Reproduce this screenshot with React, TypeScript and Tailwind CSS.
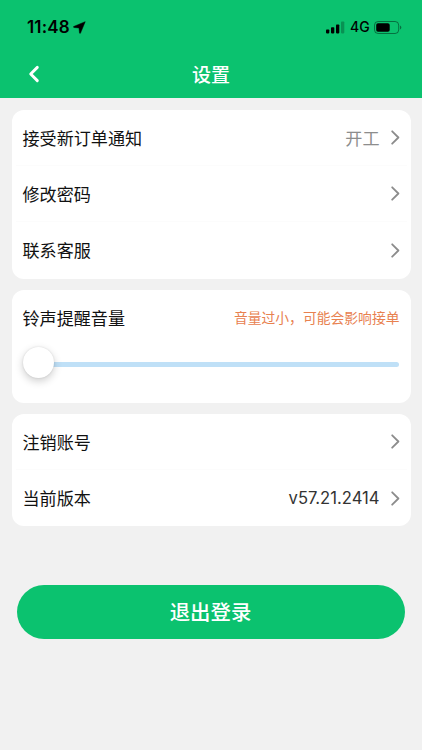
import React from "react";

function Chevron() {
  return (
    <svg width="9" height="15" viewBox="0 0 9 15" fill="none" className="shrink-0">
      <path d="M1.2 1.3 7.4 7.5 1.2 13.7" stroke="#8c8c8c" strokeWidth="1.8" strokeLinecap="round" strokeLinejoin="round" />
    </svg>
  );
}

type RowProps = { label: string; value?: string; valueClass?: string; divided?: boolean };

function Row({ label, value, valueClass = "", divided = false }: RowProps) {
  return (
    <div className={`flex h-[56.2px] shrink-0 items-center justify-between pl-[6.5px] pr-[7px] pt-px ${divided ? "border-b border-[#fcfcfc]" : ""}`}>
      <span className="pt-1">{label}</span>
      <div className="flex items-center gap-[11px]">
        {value && <span className={valueClass}>{value}</span>}
        <Chevron />
      </div>
    </div>
  );
}

function StatusBar() {
  return (
    <div className="flex h-[54px] items-center justify-between pl-[27px] pr-[20px] text-black">
      <div className="flex items-center">
        <span className="w-[43px] font-[Inter,sans-serif] text-[17px] leading-5 font-semibold tracking-[0.15px] whitespace-nowrap">11:48</span>
        <svg width="13" height="13" viewBox="0 0 13 13" className="ml-[3px]">
          <path d="M12.2.7.7 5.5Q.1 6.2.9 6.5l5.1.4.5 5.1q.3.8 1 .1Z" fill="currentColor" stroke="currentColor" strokeWidth=".5" strokeLinejoin="round" />
        </svg>
      </div>
      <div className="flex items-center">
        <svg width="19" height="13" viewBox="0 0 19 13">
          <rect x="0" y="8.4" width="3.3" height="4" rx=".8" />
          <rect x="5" y="6.2" width="3.3" height="6.2" rx=".8" />
          <rect x="10" y="3.4" width="3.3" height="9" rx=".8" />
          <rect x="15" y=".4" width="3.3" height="12" rx=".8" opacity=".25" />
        </svg>
        <span className="ml-[5px] w-[19px] font-[Inter,sans-serif] text-[14px] leading-5 font-medium">4G</span>
        <svg width="28" height="13" viewBox="0 0 28 13" className="ml-[5px]">
          <rect x=".5" y=".5" width="24.2" height="12" rx="3.6" fill="none" stroke="#000" strokeOpacity=".42" />
          <rect x="2.2" y="2.2" width="13.5" height="8.6" rx="1.8" />
          <path d="M26 4.5q1.3.5 1.3 2t-1.3 2Z" opacity=".42" />
        </svg>
      </div>
    </div>
  );
}

export default function App() {
  return (
    <div className="h-[750px] w-[422px] overflow-hidden bg-[#f1f1f1] font-['Liberation_Sans','Noto_Sans_CJK_SC',sans-serif] text-[17.1px] leading-6 text-[#111]">
      <header className="h-[98px] bg-[#0bc26f]">
        <StatusBar />
        <div className="grid h-10 grid-cols-[60px_1fr_60px] items-center text-white">
          <svg width="12" height="18" viewBox="0 0 12 18" fill="none" className="ml-[28px]">
            <path d="M9.3 2.4 2.7 9l6.6 6.6" stroke="white" strokeWidth="2.9" strokeLinecap="round" strokeLinejoin="round" />
          </svg>
          <h1 className="pt-[3px] text-center text-[19px] font-medium">设置</h1>
        </div>
      </header>
      <main className="pl-[11.5px] pr-[11px] pt-[11.5px]">
        <section className="flex h-[169px] flex-col rounded-[12px] bg-white px-[4.5px]">
          <Row label="接受新订单通知" value="开工" valueClass="pt-1 text-[#8d8d8d]" divided />
          <Row label="修改密码" divided />
          <Row label="联系客服" />
        </section>
        <section className="mt-[11.5px] h-[112.5px] rounded-[12px] bg-white pl-[11px] pr-[11.5px]">
          <div className="flex h-[56px] items-center justify-between">
            <span className="pt-1">铃声提醒音量</span>
            <span className="pt-[2px] text-[13.8px] text-[#e8814f]">音量过小，可能会影响接单</span>
          </div>
          <div className="flex h-[33px] items-center">
            <div className="z-10 size-[31px] shrink-0 rounded-full bg-white shadow-[0_3px_9px_rgba(0,0,0,0.2),0_0_2px_rgba(0,0,0,0.12)]" />
            <div className="-ml-4 mr-[1px] mt-[3px] h-[5px] flex-1 rounded-full bg-[#bfe0f7]" />
          </div>
        </section>
        <section className="mt-[11px] flex h-[112.5px] flex-col rounded-[12px] bg-white px-[4.5px]">
          <Row label="注销账号" divided />
          <Row label="当前版本" value="v57.21.2414" valueClass="font-[Inter,sans-serif] text-[16.6px] text-[#333]" />
        </section>
        <button className="ml-[5.5px] mt-[58.5px] block h-[54px] w-[388px] rounded-full bg-[#0bc26f] pr-[1px] pt-[2px] text-[20.4px] font-medium text-white">退出登录</button>
      </main>
    </div>
  );
}
